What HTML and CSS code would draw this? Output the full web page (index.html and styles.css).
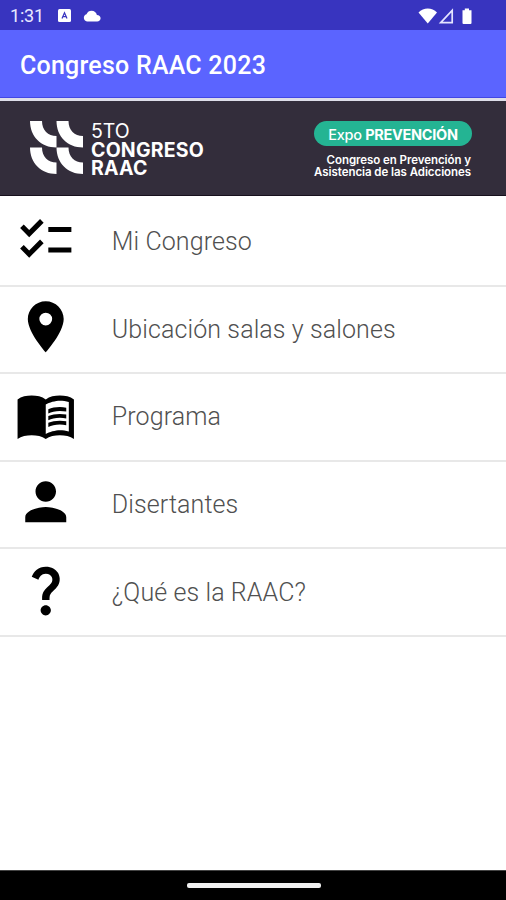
FILE: index.html
```html
<!DOCTYPE html>
<html lang="es">
<head>
<meta charset="utf-8">
<title>Congreso RAAC 2023</title>
<link rel="stylesheet" href="styles.css">
</head>
<body>
<div class="status">
  <span class="clock">1:31</span>
  <svg class="app-badge" width="13" height="13" viewBox="0 0 13 13"><rect width="13" height="13" rx="1.5" fill="#fff"/><path d="M4 9.500 6.500 3.800 9 9.500M5 7.700H8" fill="none" stroke="#3934c0" stroke-width="1.200"/></svg>
  <svg class="cloud" width="18" height="12" viewBox="0 0 18 12"><path d="M4 11.500A3.700 3.700 0 0 1 3.500 4.300C4.500 1.800 6.300.7 8.500.7c2.800 0 4.900 1.700 5.400 4.200 2.200.1 3.700 1.500 3.700 3.400 0 1.800-1.500 3.200-3.500 3.200z" fill="#fff"/></svg>
  <svg class="signals" width="56" height="18" viewBox="0 0 56 18"><path d="M.5 5.500C5.500.3 14 .3 19 5.500L9.750 16.500z" fill="#fff"/><path d="M22.700 15.600 34.200 3.500V15.600z" fill="none" stroke="#e4e4ff" stroke-width="1.700"/><path d="M44.500 3.300h2.300V1.500h4.200v1.800h2.500V16a1 1 0 0 1-1 1h-7a1 1 0 0 1-1-1z" fill="#fff"/></svg>
</div>
<header class="appbar"><h1>Congreso RAAC 2023</h1></header>
<section class="banner">
  <svg class="logo" width="53" height="53" viewBox="0 0 53 53" fill="#fff"><defs><path id="arc" d="M0 0H12C12 9 18 15 26.500 15V26.500C11 26.500 0 15.500 0 0z"/></defs><use href="#arc"/><use href="#arc" x="26.500"/><use href="#arc" y="26.500"/><use href="#arc" x="26.500" y="26.500"/></svg>
  <div class="brand"><span class="thin">5TO</span><span>CONGRESO</span><span>RAAC</span></div>
  <div class="expo">
    <div class="pill">Expo <b>PREVENCIÓN</b></div>
    <div class="tagline">Congreso en Prevención y<br>Asistencia de las Adicciones</div>
  </div>
</section>
<nav class="menu">
  <a class="row"><svg class="icon" viewBox="0 0 24 24"><path d="M22 7h-9v2h9V7zm0 8h-9v2h9v-2zM5.540 11 2 7.460l1.410-1.410 2.120 2.120 4.240-4.240 1.410 1.410L5.540 11zm0 8L2 15.460l1.410-1.410 2.120 2.120 4.240-4.240 1.410 1.410L5.540 19z"/></svg><span class="label">Mi Congreso</span></a>
  <a class="row"><svg class="icon" viewBox="0 0 24 24"><path d="M12 2C8.130 2 5 5.130 5 9c0 5.250 7 13 7 13s7-7.750 7-13c0-3.870-3.130-7-7-7zm0 9.500a2.500 2.500 0 0 1 0-5 2.500 2.500 0 0 1 0 5z"/></svg><span class="label">Ubicación salas y salones</span></a>
  <a class="row"><svg class="icon" viewBox="0 0 24 24"><path fill-rule="evenodd" d="M17.500 4.500c-1.950 0-4.050.4-5.500 1.500-1.450-1.100-3.550-1.500-5.500-1.500S2.450 4.900 1 6v15.500C2.450 20.400 4.550 20 6.500 20s4.050.4 5.500 1.500c1.450-1.100 3.550-1.500 5.500-1.500s4.050.4 5.500 1.500V6c-1.450-1.100-3.550-1.500-5.500-1.500zM21 18.500c-1.100-.35-2.300-.5-3.500-.5-1.700 0-4.150.65-5.500 1.500V8c1.350-.85 3.800-1.500 5.500-1.500 1.200 0 2.400.15 3.500.5z"/><path d="M17.500 10.500c.88 0 1.730.09 2.500.26V9.240A13 13 0 0 0 17.500 9c-1.700 0-3.240.29-4.500.83v1.660c1.130-.64 2.700-.99 4.500-.99zM13 12.490v1.660c1.130-.64 2.700-.99 4.500-.99.88 0 1.730.09 2.500.26V11.900c-.79-.15-1.640-.24-2.500-.24-1.700 0-3.240.3-4.500.83zM17.500 14.330c-1.700 0-3.240.29-4.500.83v1.660c1.130-.64 2.700-.99 4.500-.99.88 0 1.730.09 2.500.26v-1.520c-.79-.16-1.640-.24-2.500-.24z"/></svg><span class="label">Programa</span></a>
  <a class="row"><svg class="icon" viewBox="0 0 24 24"><path d="M12 12c2.210 0 4-1.790 4-4s-1.790-4-4-4-4 1.790-4 4 1.790 4 4 4zm0 2c-2.670 0-8 1.340-8 4v2h16v-2c0-2.660-5.330-4-8-4z"/></svg><span class="label">Disertantes</span></a>
  <a class="row"><svg class="icon" viewBox="0 0 24 24"><path d="M11.070 12.850c.77-1.390 2.250-2.210 3.110-3.440.91-1.290.4-3.700-2.180-3.700-1.690 0-2.520 1.280-2.870 2.340L6.540 6.960C7.250 4.830 9.180 3 11.990 3c2.350 0 3.960 1.070 4.780 2.410.7 1.150 1.110 3.300.03 4.900-1.200 1.770-2.350 2.310-2.970 3.450-.25.46-.35.76-.35 2.240h-2.890c-.01-.78-.13-2.050.48-3.150zM14 20c0 1.100-.9 2-2 2s-2-.9-2-2 .9-2 2-2 2 .9 2 2z"/></svg><span class="label">¿Qué es la RAAC?</span></a>
</nav>
<footer class="navbar"><div class="handle"></div></footer>
</body>
</html>
```
FILE: styles.css
```css
* { box-sizing: border-box; }
body {
  margin: 0;
  height: 900px;
  display: flex;
  flex-direction: column;
  overflow: hidden;
  background: #fff;
  font-family: Roboto, sans-serif;
}
svg { display: block; flex: none; }
.status {
  height: 30px;
  flex: none;
  display: flex;
  align-items: center;
  padding: 1px 32px 0 10px;
  background: #3834bf;
  color: #e8e8ff;
}
.clock { width: 48px; font-size: 18px; letter-spacing: -0.2px; }
.cloud { margin-left: 12px; }
.signals { margin-left: auto; }
.appbar {
  height: 68px;
  flex: none;
  display: flex;
  align-items: center;
  padding: 3px 20px 0;
  background: #5b64ff;
  border-bottom: 1px solid #4247e4;
}
h1 {
  margin: 0;
  color: #fff;
  font-size: 25px;
  font-weight: 500;
  letter-spacing: 0.23px;
  white-space: nowrap;
}
.banner {
  height: 98px;
  flex: none;
  display: flex;
  align-items: flex-start;
  padding: 20px 34px 0 30px;
  background: #332d3b;
  border-top: 3px solid #dedee9;
  border-bottom: 1px solid #17101d;
  color: #fff;
  font-family: Inter, sans-serif;
}
.brand {
  display: flex;
  flex-direction: column;
  margin: 1px 0 0 8px;
  font-size: 19.5px;
  line-height: 18.5px;
  font-weight: 700;
  letter-spacing: 0.2px;
}
.thin { font-weight: 400; letter-spacing: 0; }
.expo {
  margin-left: auto;
  display: flex;
  flex-direction: column;
  align-items: flex-end;
}
.pill {
  width: 158px;
  height: 25px;
  border-radius: 13px;
  background: #24b493;
  font-size: 14.5px;
  font-weight: 500;
  line-height: 27px;
  letter-spacing: -0.3px;
  text-align: center;
  white-space: nowrap;
}
.tagline {
  margin: 8px 1px 0 0;
  font-size: 11.5px;
  font-weight: 600;
  line-height: 12px;
  letter-spacing: -0.06px;
  text-align: right;
  white-space: nowrap;
}
.menu { flex: 1; padding-top: 3px; }
.row {
  height: 87.6px;
  display: flex;
  align-items: center;
  padding: 0 0 4px 15.4px;
  border-bottom: 2px solid #e8e8e8;
}
.icon { width: 61.5px; height: 61.5px; margin-top: -1px; fill: #000; }
.label {
  margin: 4px 0 0 34.9px;
  color: #505050;
  font-size: 25px;
  font-weight: 300;
  letter-spacing: 0.1px;
  white-space: nowrap;
}
.navbar {
  height: 30px;
  flex: none;
  display: flex;
  justify-content: center;
  padding: 12px 0 0 1px;
  background: #000;
  border-top: 1px solid #444;
}
.handle { width: 134px; height: 5px; border-radius: 2px; background: #f0f0f0; }
```
